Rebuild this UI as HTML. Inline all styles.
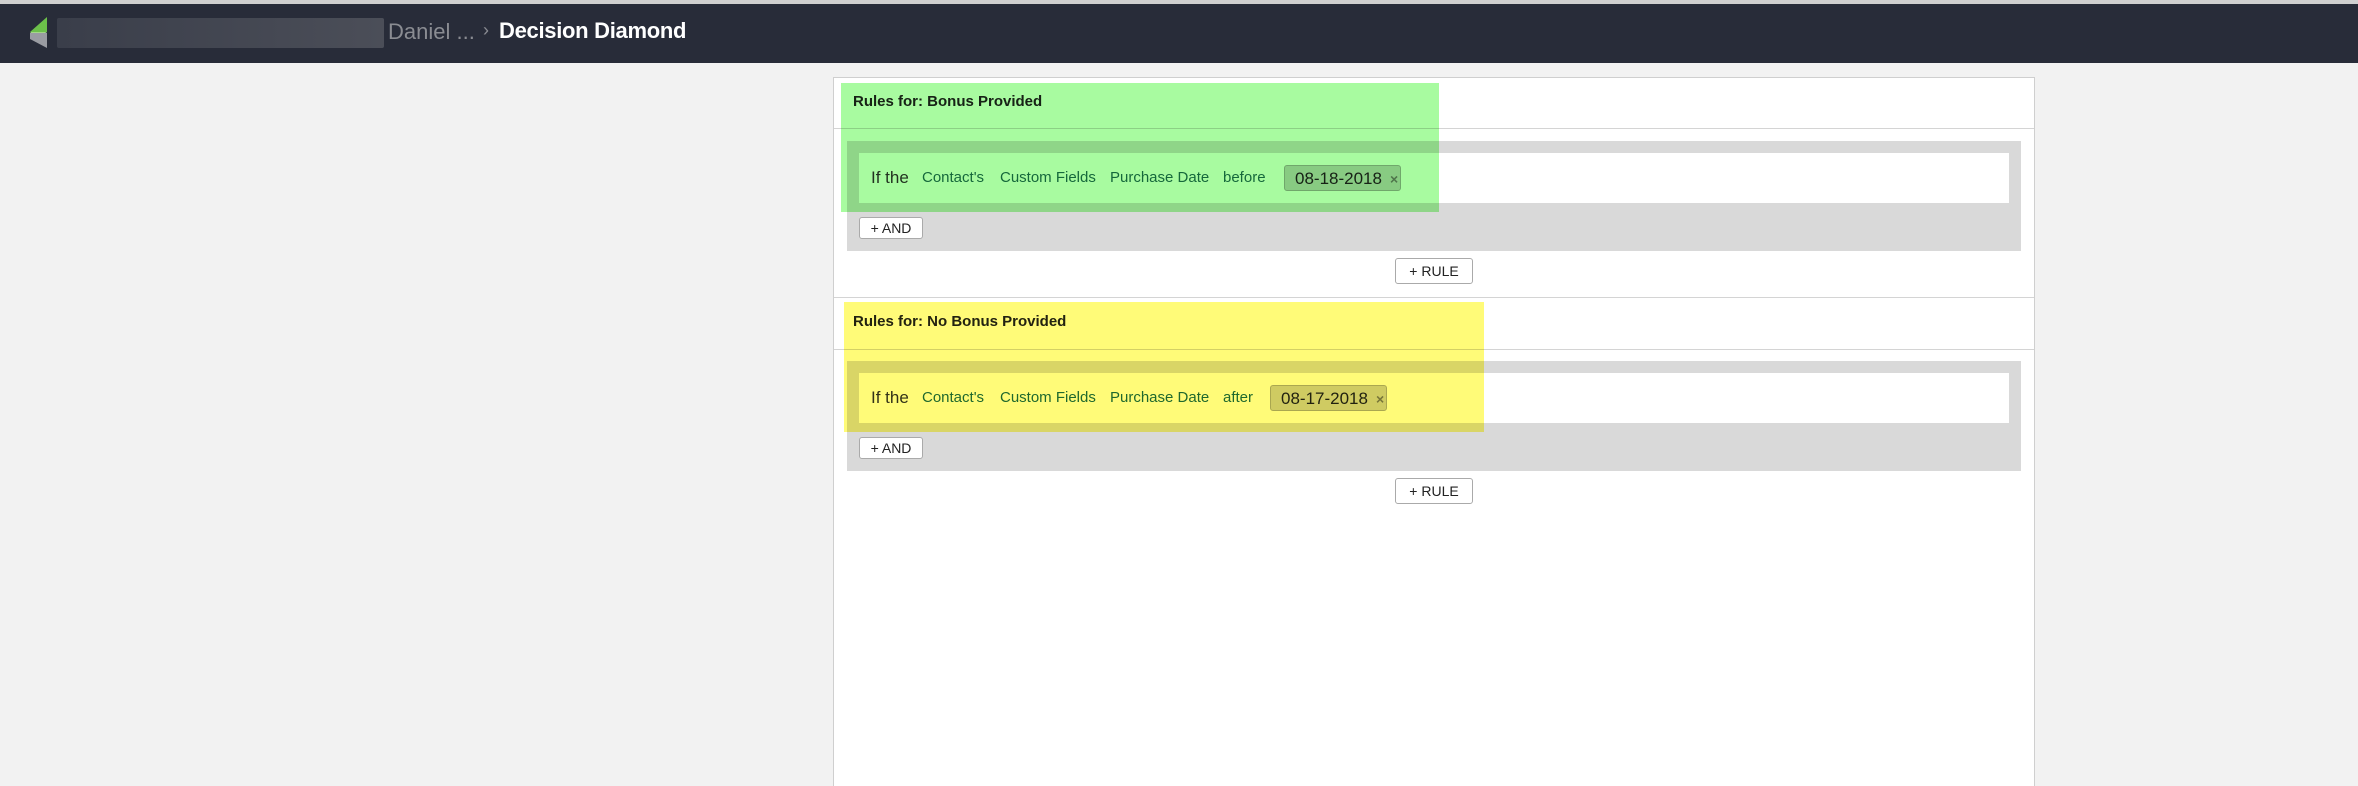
<!DOCTYPE html>
<html style="height:786px;overflow:hidden"><head><meta charset="utf-8"><style>
*{margin:0;padding:0;box-sizing:border-box}
body{width:2358px;height:786px;background:#f2f2f2;font-family:"Liberation Sans",sans-serif;position:relative;overflow:hidden}
.a{position:absolute}
.hdr{left:0;top:4px;width:2358px;height:59px;background:#282c39}
.topline{left:0;top:0;width:2358px;height:4px;background:#d0d0d0}
.panel{left:833px;top:77px;width:1202px;height:709px;background:#fff;border:1px solid #cfcfcf;border-bottom:none}
.line{height:1px;background:#d4d4d4;left:834px;width:1200px}
.h{font-weight:bold;font-size:15px;color:#222}
.gray{background:#d9d9d9;left:847px;width:1174px}
.white{background:#fff;left:859px;width:1150px}
.t{font-size:15px;color:#1f6a5e;top:0}
.if{font-size:17px;color:#333}
.chip{background:#cfcfcf;border:1px solid #aaa;border-radius:3px;font-size:17px;color:#222;padding:3px 0 0 10px;height:26px}
.chip span{color:#777;font-size:14px;font-weight:bold;margin-left:8px}
.btn{background:#fff;border:1px solid #aaa;border-radius:3px;font-size:14px;color:#222;text-align:center}
.hl{mix-blend-mode:multiply}
</style></head><body>
<div class="a topline"></div>
<div class="a hdr"></div>
<svg class="a" style="left:27px;top:17px" width="22" height="31" viewBox="0 0 22 31"><polygon points="20,0 20,15 3,15" fill="#6cc04a"/><polygon points="3,15 20,15 10,21" fill="#a4d886"/><polygon points="3,16 20,16 20,31 3,22" fill="#9a9ca2"/></svg>
<div class="a" style="left:57px;top:18px;width:327px;height:30px;background:linear-gradient(90deg,#3a3e4a,#4b4e58);border-radius:2px"></div>
<div class="a" style="left:388px;top:19px;font-size:22px;color:#8a8c92">Daniel ...</div>
<div class="a" style="left:483px;top:20px;font-size:18px;color:#8a8c92">›</div>
<div class="a" style="left:499px;top:18px;font-size:22px;color:#fff;font-weight:bold;letter-spacing:-0.3px">Decision Diamond</div>

<div class="a panel"></div>

<div class="a h" style="left:853px;top:93px">Rules for: Bonus Provided</div>
<div class="a line" style="top:128px"></div>
<div class="a gray" style="top:141px;height:110px"></div>
<div class="a white" style="top:153px;height:50px"></div>
<div class="a if" style="left:871px;top:168px">If the</div>
<div class="a t" style="left:922px;top:169px">Contact's</div>
<div class="a t" style="left:1000px;top:169px">Custom Fields</div>
<div class="a t" style="left:1110px;top:169px">Purchase Date</div>
<div class="a t" style="left:1223px;top:169px">before</div>
<div class="a chip" style="left:1284px;top:165px;width:117px">08-18-2018<span>×</span></div>
<div class="a btn" style="left:859px;top:217px;width:64px;height:22px;line-height:20px">+ AND</div>
<div class="a btn" style="left:1395px;top:258px;width:78px;height:26px;line-height:24px">+ RULE</div>
<div class="a line" style="top:297px"></div>

<div class="a h" style="left:853px;top:313px">Rules for: No Bonus Provided</div>
<div class="a line" style="top:349px"></div>
<div class="a gray" style="top:361px;height:110px"></div>
<div class="a white" style="top:373px;height:50px"></div>
<div class="a if" style="left:871px;top:388px">If the</div>
<div class="a t" style="left:922px;top:389px">Contact's</div>
<div class="a t" style="left:1000px;top:389px">Custom Fields</div>
<div class="a t" style="left:1110px;top:389px">Purchase Date</div>
<div class="a t" style="left:1223px;top:389px">after</div>
<div class="a chip" style="left:1270px;top:385px;width:117px">08-17-2018<span>×</span></div>
<div class="a btn" style="left:859px;top:437px;width:64px;height:22px;line-height:20px">+ AND</div>
<div class="a btn" style="left:1395px;top:478px;width:78px;height:26px;line-height:24px">+ RULE</div>

<div class="a hl" style="left:841px;top:83px;width:598px;height:129px;background:#a8fba0"></div>
<div class="a hl" style="left:844px;top:302px;width:640px;height:130px;background:#fffb78"></div>
</body></html>
